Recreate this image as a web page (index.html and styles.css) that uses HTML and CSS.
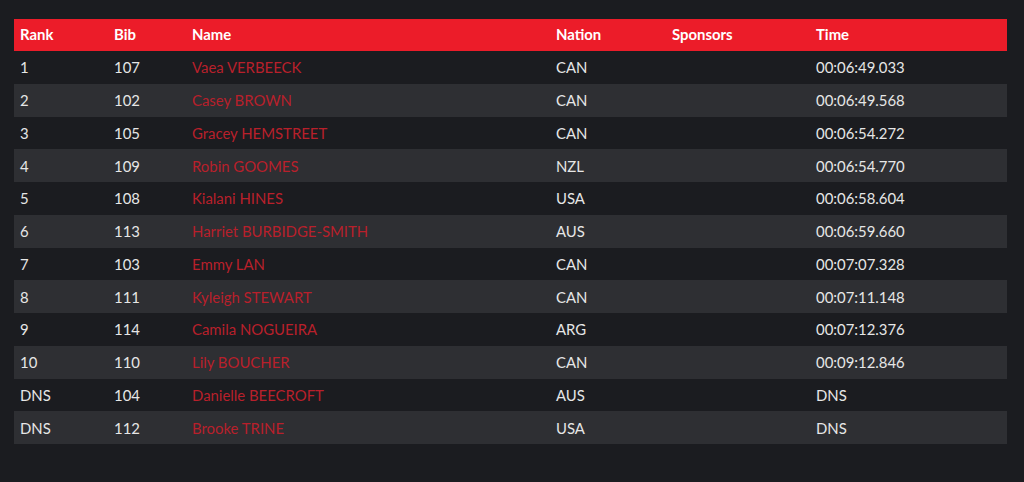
FILE: index.html
```html
<!DOCTYPE html>
<html lang="en">
<head>
<meta charset="utf-8">
<title>Results</title>
<link rel="stylesheet" href="styles.css">
</head>
<body>
<div class="results">
  <div class="row head">
    <div>Rank</div><div>Bib</div><div>Name</div><div>Nation</div><div>Sponsors</div><div>Time</div>
  </div>
  <div class="row"><div>1</div><div>107</div><div class="name">Vaea VERBEECK</div><div>CAN</div><div></div><div>00:06:49.033</div></div>
  <div class="row alt"><div>2</div><div>102</div><div class="name">Casey BROWN</div><div>CAN</div><div></div><div>00:06:49.568</div></div>
  <div class="row"><div>3</div><div>105</div><div class="name">Gracey HEMSTREET</div><div>CAN</div><div></div><div>00:06:54.272</div></div>
  <div class="row alt"><div>4</div><div>109</div><div class="name">Robin GOOMES</div><div>NZL</div><div></div><div>00:06:54.770</div></div>
  <div class="row"><div>5</div><div>108</div><div class="name">Kialani HINES</div><div>USA</div><div></div><div>00:06:58.604</div></div>
  <div class="row alt"><div>6</div><div>113</div><div class="name">Harriet BURBIDGE-SMITH</div><div>AUS</div><div></div><div>00:06:59.660</div></div>
  <div class="row"><div>7</div><div>103</div><div class="name">Emmy LAN</div><div>CAN</div><div></div><div>00:07:07.328</div></div>
  <div class="row alt"><div>8</div><div>111</div><div class="name">Kyleigh STEWART</div><div>CAN</div><div></div><div>00:07:11.148</div></div>
  <div class="row"><div>9</div><div>114</div><div class="name">Camila NOGUEIRA</div><div>ARG</div><div></div><div>00:07:12.376</div></div>
  <div class="row alt"><div>10</div><div>110</div><div class="name">Lily BOUCHER</div><div>CAN</div><div></div><div>00:09:12.846</div></div>
  <div class="row"><div>DNS</div><div>104</div><div class="name">Danielle BEECROFT</div><div>AUS</div><div></div><div>DNS</div></div>
  <div class="row alt"><div>DNS</div><div>112</div><div class="name">Brooke TRINE</div><div>USA</div><div></div><div>DNS</div></div>
</div>
</body>
</html>
```
FILE: styles.css
```css
html, body {
  margin: 0;
  padding: 0;
  background: #1b1c20;
}
body {
  padding: 19px 17.5px 0 13.5px;
  font-family: Lato, "Liberation Sans", sans-serif;
  font-size: 14.9px;
  color: #e6e6e6;
}
.results {
  display: flex;
  flex-direction: column;
}
.row {
  display: grid;
  grid-template-columns: 94px 78px 364px 116px 144px 1fr;
  height: 32.75px;
  align-items: center;
}
.row > div {
  padding-left: 6.5px;
  white-space: nowrap;
}
.head {
  height: 32px;
  background: #ec1c29;
  color: #ffffff;
  font-weight: 700;
}
.head > div {
  padding-bottom: 2px;
}
.alt {
  background: #2e2f33;
}
.name {
  color: #b8202b;
}
```
